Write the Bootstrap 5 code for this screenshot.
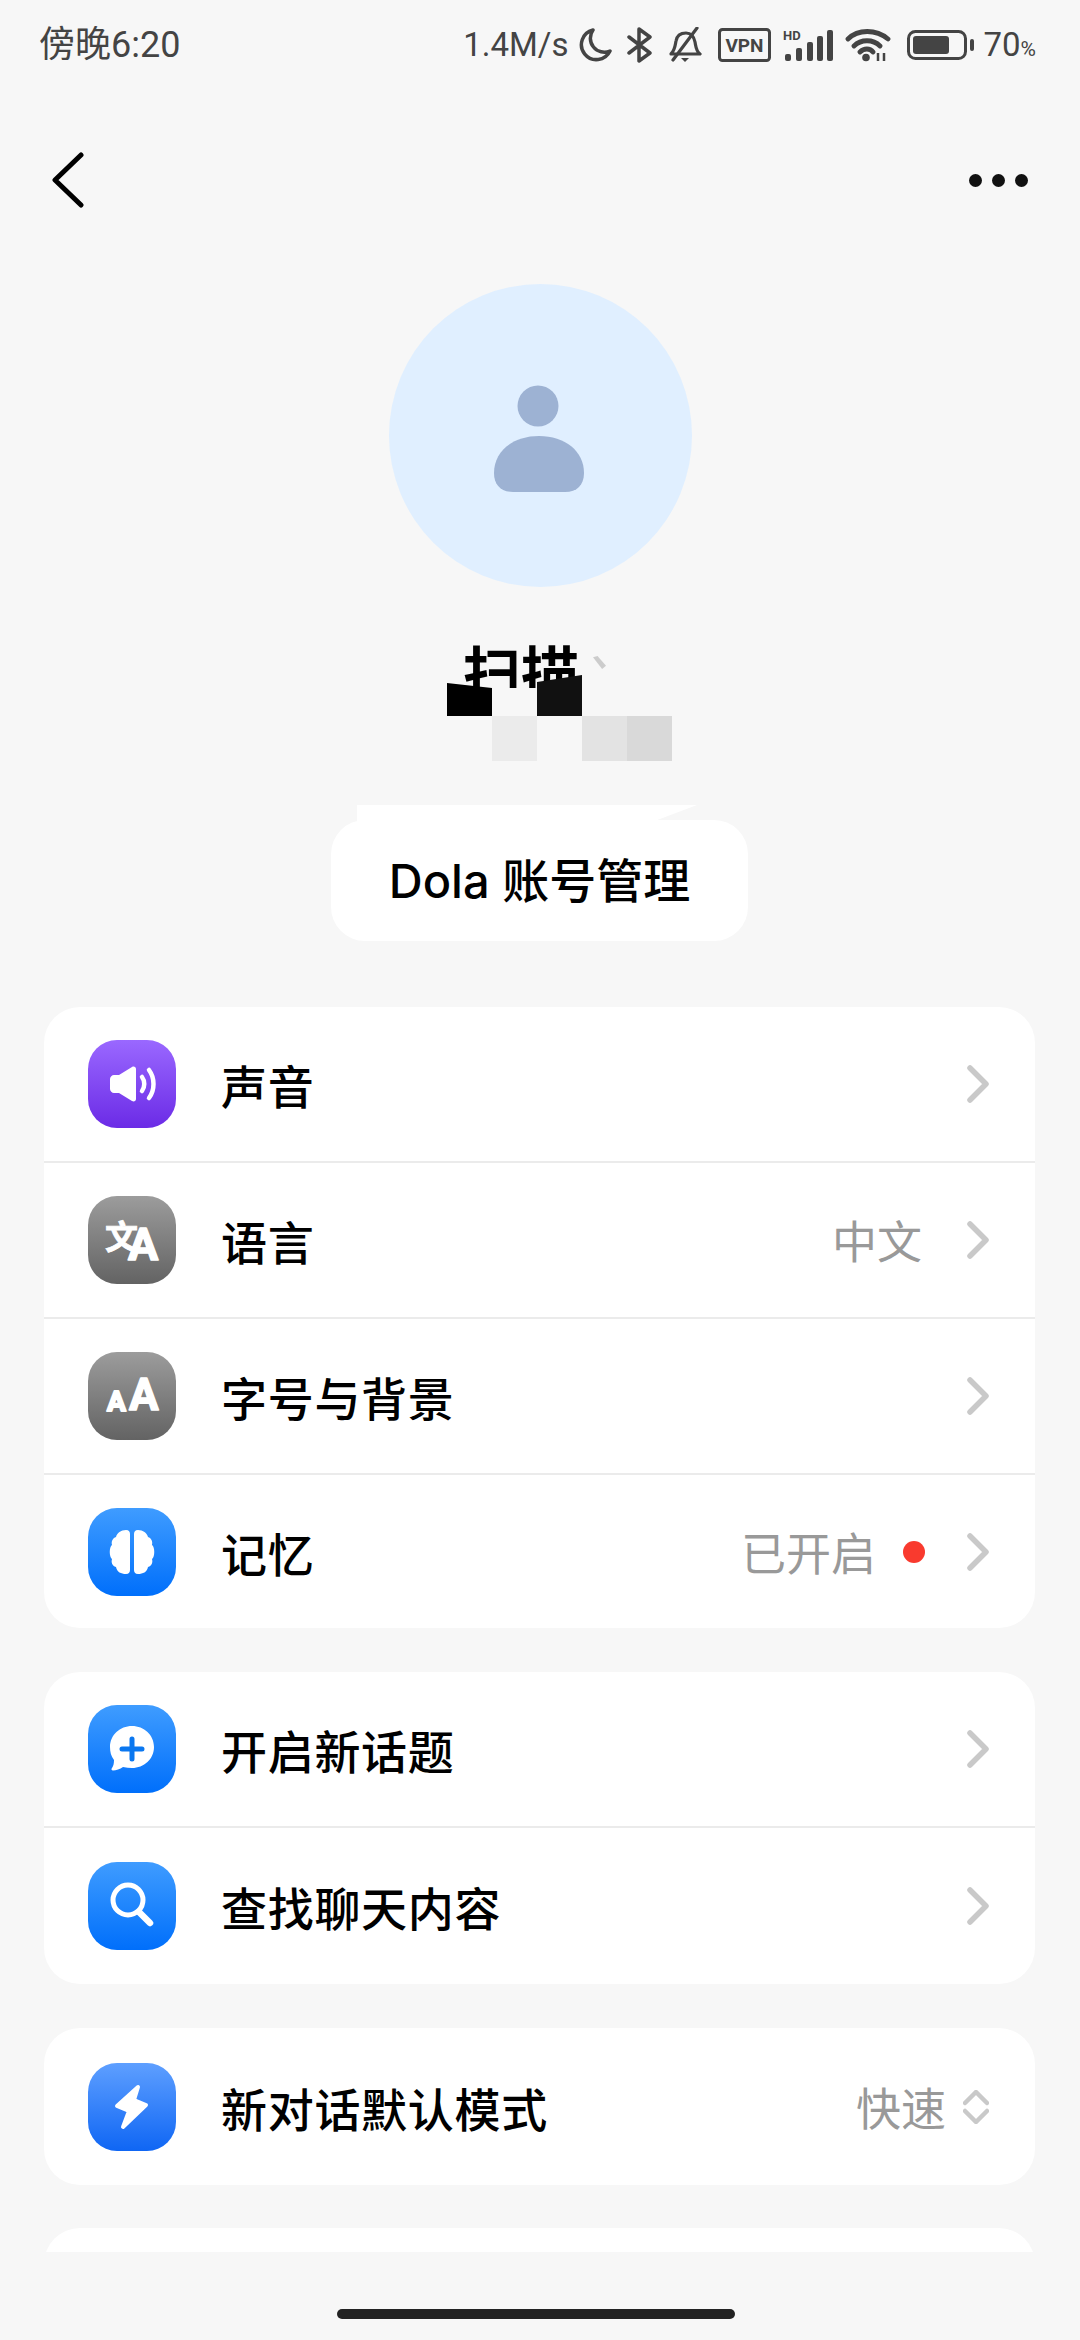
<!DOCTYPE html>
<html lang="zh-CN">
<head>
  <meta charset="UTF-8" />
  <title>Dola</title>
  <meta name="viewport" content="width=device-width, initial-scale=1" />
  <link href="https://cdn.jsdelivr.net/npm/bootstrap@5.3.0/dist/css/bootstrap.min.css" rel="stylesheet" />
  <style>
    html, body {
      width: 1080px;
      height: 2340px;
      overflow: hidden;
    }
    body {
      background-color: #f7f7f7;
      color: #000;
      font-family: "Noto Sans CJK SC", "Noto Sans", sans-serif;
    }
    .status-row {
      height: 90px;
      padding: 0 44px 0 39px;
      color: #444;
      font-family: Roboto, "Noto Sans CJK SC", sans-serif;
      font-size: 33px;
    }
    .status-time { font-size: 36px; }
    .status-pct small { font-size: 21px; }
    .status-icons svg { display: block; }
    .top-row {
      height: 120px;
      margin-top: 30px;
      padding: 0 52px;
    }
    .more-dots { gap: 10px; }
    .more-dots i {
      display: block;
      width: 13px;
      height: 13px;
      border-radius: 50%;
      background: #111;
    }
    .avatar-disc {
      width: 303px;
      height: 303px;
      margin-top: 44px;
      border-radius: 50%;
      background: #e0efff;
    }
    .avatar-figure { margin-top: 6px; margin-right: 2px; }
    .name-area {
      position: relative;
      height: 218px;
    }
    .name-text {
      position: absolute;
      left: 463px;
      top: 48px;
      font-size: 58px;
      line-height: 70px;
      font-weight: 700;
      white-space: nowrap;
    }
    .mos {
      position: absolute;
      height: 45px;
      width: 45px;
    }
    .mos-mask { left: 440px; top: 101px; width: 150px; height: 30px; background: #f7f7f7; }
    .mos-a { left: 447px; top: 96px; height: 33px; background: #000; clip-path: polygon(0 0, 100% 15%, 100% 100%, 0 100%); }
    .mos-b { left: 537px; top: 88px; height: 41px; background: #111; clip-path: polygon(0 17%, 100% 0, 100% 100%, 0 100%); }
    .mos-c { left: 492px; top: 129px; background: #ebebeb; }
    .mos-d { left: 582px; top: 129px; background: #e3e3e3; }
    .mos-e { left: 627px; top: 129px; background: #d9d9d9; }
    .mos-tick { left: 593px; top: 69px; width: 13px; height: 13px; background: #ccc; clip-path: polygon(0 10%, 35% 0, 100% 75%, 70% 100%); }
    .account-wrap {
      position: relative;
      height: 136px;
    }
    .account-tail {
      position: absolute;
      left: 357px;
      top: 0;
      width: 340px;
      height: 20px;
      background: #fff;
      clip-path: polygon(0 0, 100% 0, 86% 90%, 0 100%);
    }
    .account-btn {
      position: absolute;
      left: 331px;
      top: 15px;
      width: 417px;
      height: 121px;
      border: 0;
      border-radius: 34px;
      background: #fff;
      color: #000;
      font-family: Inter, "Noto Sans CJK SC", sans-serif;
      font-size: 47px;
      font-weight: 500;
      padding: 2px 0 0;
    }
    .account-btn:hover { background: #fff; color: #000; }
    .scroll-area {
      height: 1245px;
      margin-top: 66px;
      padding: 0 45px 0 44px;
      overflow: hidden;
    }
    .set-card {
      --bs-list-group-border-radius: 36px;
      --bs-list-group-border-width: 0;
      margin-bottom: 44px;
    }
    .set-row {
      height: 156px;
      padding: 0 46px 0 44px;
      border: 0;
      border-bottom: 2px solid #ebebeb;
      color: #000;
    }
    .set-row:last-child { border-bottom: 0; height: 153px; }
    .set-card-b .set-row:last-child { height: 156px; }
    .set-card-c { margin-bottom: 43px; }
    .set-card-c .set-row:last-child { height: 157px; }
    .set-card-d .set-row:last-child { height: 157px; }
    .tile {
      width: 88px;
      height: 88px;
      flex: none;
      border-radius: 29px;
      margin-right: 45px;
    }
    .tile svg { display: block; }
    .tile-purple { background: linear-gradient(#9a68ff, #6b2be6); }
    .tile-gray { background: linear-gradient(#9c9c9c, #636363); }
    .tile-blue { background: linear-gradient(#3f9cff, #006ffb); }
    .tile-bolt { background: linear-gradient(#5e9fff, #0f66f4); }
    .row-label {
      font-size: 46px;
      font-weight: 500;
      line-height: 60px;
      letter-spacing: 0.7px;
    }
    .row-value {
      color: #999;
      font-size: 45px;
      line-height: 60px;
      margin-right: 45px;
    }
    .row-value-tight { margin-right: 17px; }
    .row-value-dot { margin-right: 27px; }
    .red-dot {
      width: 22px;
      height: 22px;
      border-radius: 50%;
      background: #f93a2e;
      margin-right: 42px;
    }
    .home-bar {
      width: 398px;
      height: 10px;
      margin: 57px 0 0 337px;
      border-radius: 5px;
      background: #222;
    }
  </style>
</head>
<body>

  <!-- status bar -->
  <div class="status-row d-flex align-items-center justify-content-between">
    <div class="status-time">傍晚6:20</div>
    <div class="status-icons d-flex align-items-center">
      <span style="margin-right:9px">1.4M/s</span>
      <svg width="35" height="36" viewBox="0 0 35 36" style="margin-right:13px"><path d="M15 3A15 15 0 1 0 32 24A14 14 0 0 1 15 3Z" fill="none" stroke="#444" stroke-width="3.5" stroke-linejoin="round"/></svg>
      <svg width="28" height="36" viewBox="0 0 28 36" style="margin-right:14px"><path d="M3 10L24 26L13 34V2L24 10L3 26" fill="none" stroke="#444" stroke-width="3.5" stroke-linejoin="round" stroke-linecap="round"/></svg>
      <svg width="34" height="36" viewBox="0 0 34 36" style="margin-right:16px"><path d="M3 27C7 23 7 19 8 14C9 8 13 6 18 6C23 6 26 10 27 15C28 20 28 24 32 27H3Z" fill="none" stroke="#444" stroke-width="3.2" stroke-linejoin="round"/><path d="M29 1L5 33" stroke="#444" stroke-width="3.2" stroke-linecap="round"/><path d="M13 31H21L17 35Z" fill="#444"/></svg>
      <svg width="53" height="34" viewBox="0 0 53 34" style="margin-right:12px"><rect x="1.5" y="1.5" width="50" height="31" rx="3" fill="none" stroke="#444" stroke-width="3"/><text x="26.5" y="24" text-anchor="middle" font-family="Roboto, sans-serif" font-weight="700" font-size="19" fill="#444">VPN</text></svg>
      <svg width="50" height="32" viewBox="0 0 50 32" style="margin-right:12px"><text x="0" y="11" font-family="Roboto, sans-serif" font-weight="700" font-size="13" fill="#444">HD</text><rect x="2" y="25" width="6" height="7" rx="2" fill="#444"/><rect x="13" y="19" width="6" height="13" rx="2" fill="#444"/><rect x="24" y="13" width="6" height="19" rx="2" fill="#444"/><rect x="34" y="7" width="6" height="25" rx="2" fill="#444"/><rect x="44" y="1" width="6" height="31" rx="2" fill="#444"/></svg>
      <svg width="46" height="34" viewBox="0 0 46 34" style="margin-right:16px"><path d="M3 11C13 1 31 1 43 11M9 18C16 11 28 11 35 18M15 24C19 20 25 20 28 24" fill="none" stroke="#444" stroke-width="4.800" stroke-linecap="round"/><circle cx="21" cy="29.500" r="3.800" fill="#444"/><path d="M33 25V33M39 25V33" stroke="#444" stroke-width="2.5"/></svg>
      <svg width="67" height="30" viewBox="0 0 67 30" style="margin-right:10px"><rect x="1.5" y="1.5" width="57" height="27" rx="7" fill="none" stroke="#444" stroke-width="3"/><rect x="6" y="6" width="36" height="18" rx="3" fill="#444"/><rect x="63" y="9" width="4" height="12" rx="2" fill="#444"/></svg>
      <span class="status-pct">70<small>%</small></span>
    </div>
  </div>

  <!-- back and more -->
  <div class="top-row d-flex align-items-center justify-content-between">
    <svg width="32" height="56" viewBox="0 0 32 56"><path d="M29 3L3 28L29 53" fill="none" stroke="#000" stroke-width="5" stroke-linecap="round" stroke-linejoin="round"/></svg>
    <div class="more-dots d-flex"><i></i><i></i><i></i></div>
  </div>

  <!-- profile -->
  <div class="avatar-disc mx-auto d-flex align-items-center justify-content-center">
    <svg class="avatar-figure" width="92" height="107" viewBox="0 0 92 107"><circle cx="45" cy="21" r="20.500" fill="#9db2d3"/><path d="M1 88C1 66 20 51 46 51C72 51 91 66 91 88C91 100 84 107 72 107H20C8 107 1 100 1 88Z" fill="#9db2d3"/></svg>
  </div>

  <div class="name-area">
    <div class="name-text">扫描</div>
    <div class="mos mos-mask"></div>
    <div class="mos mos-a"></div>
    <div class="mos mos-b"></div>
    <div class="mos mos-c"></div>
    <div class="mos mos-d"></div>
    <div class="mos mos-e"></div>
    <div class="mos mos-tick"></div>
  </div>

  <div class="account-wrap">
    <div class="account-tail"></div>
    <button type="button" class="btn account-btn">Dola 账号管理</button>
  </div>

  <!-- settings -->
  <div class="scroll-area">

    <div class="list-group set-card">
      <div class="list-group-item set-row d-flex align-items-center">
        <div class="tile tile-purple">
          <svg width="88" height="88" viewBox="0 0 88 88"><path d="M26 35H31L44 27C46 26 48 27 48 29V59C48 61 46 62 44 61L31 53H26C24 53 22 51 22 49V39C22 37 24 35 26 35Z" fill="#fff"/><path d="M54 37C57 41 57 47 54 51" fill="none" stroke="#fff" stroke-width="4.5" stroke-linecap="round"/><path d="M61 30C67 38 67 50 61 58" fill="none" stroke="#fff" stroke-width="4.5" stroke-linecap="round"/></svg>
        </div>
        <div class="row-label me-auto">声音</div>
        <svg width="22" height="38" viewBox="0 0 22 38"><path d="M3 3L19 19L3 35" fill="none" stroke="#c9c9c9" stroke-width="5.5" stroke-linecap="round" stroke-linejoin="round"/></svg>
      </div>
      <div class="list-group-item set-row d-flex align-items-center">
        <div class="tile tile-gray">
          <svg width="88" height="88" viewBox="0 0 88 88"><text x="17" y="53" font-family="'Noto Sans CJK SC', sans-serif" font-weight="700" font-size="33" fill="#fff" stroke="#fff" stroke-width="0.8">文</text><text x="40" y="64" font-family="Roboto, sans-serif" font-weight="700" font-size="45" fill="#fff" stroke="#fff" stroke-width="1.500" stroke-linejoin="round">A</text></svg>
        </div>
        <div class="row-label me-auto">语言</div>
        <div class="row-value">中文</div>
        <svg width="22" height="38" viewBox="0 0 22 38"><path d="M3 3L19 19L3 35" fill="none" stroke="#c9c9c9" stroke-width="5.5" stroke-linecap="round" stroke-linejoin="round"/></svg>
      </div>
      <div class="list-group-item set-row d-flex align-items-center">
        <div class="tile tile-gray">
          <svg width="88" height="88" viewBox="0 0 88 88"><text x="19" y="59" font-family="Roboto, sans-serif" font-weight="700" font-size="28" fill="#fff" stroke="#fff" stroke-width="2" stroke-linejoin="round">A</text><text x="41" y="58" font-family="Roboto, sans-serif" font-weight="700" font-size="44" fill="#fff" stroke="#fff" stroke-width="1.500" stroke-linejoin="round">A</text></svg>
        </div>
        <div class="row-label me-auto">字号与背景</div>
        <svg width="22" height="38" viewBox="0 0 22 38"><path d="M3 3L19 19L3 35" fill="none" stroke="#c9c9c9" stroke-width="5.5" stroke-linecap="round" stroke-linejoin="round"/></svg>
      </div>
      <div class="list-group-item set-row d-flex align-items-center">
        <div class="tile tile-blue">
          <svg width="88" height="88" viewBox="0 0 88 88"><path d="M38 22C41 22 42 24 42 26V62C42 64 41 66 38 66C33 66 29 64 28 59C24 58 23 54 24 51C21 49 21 39 24 37C23 33 25 30 28 29C29 25 33 22 38 22Z" fill="#fff"/><path d="M50 22C47 22 46 24 46 26V62C46 64 47 66 50 66C55 66 59 64 60 59C64 58 65 54 64 51C67 49 67 39 64 37C65 33 63 30 60 29C59 25 55 22 50 22Z" fill="#fff"/></svg>
        </div>
        <div class="row-label me-auto">记忆</div>
        <div class="row-value row-value-dot">已开启</div>
        <div class="red-dot"></div>
        <svg width="22" height="38" viewBox="0 0 22 38"><path d="M3 3L19 19L3 35" fill="none" stroke="#c9c9c9" stroke-width="5.5" stroke-linecap="round" stroke-linejoin="round"/></svg>
      </div>
    </div>

    <div class="list-group set-card set-card-b">
      <div class="list-group-item set-row d-flex align-items-center">
        <div class="tile tile-blue">
          <svg width="88" height="88" viewBox="0 0 88 88"><path d="M44 21C56 21 66 30 66 42C66 54 56 63 44 63C41 63 38 62.500 35 62C32 64 28 65.500 25 65.500C23.500 65.500 23 64 24 63C25.500 61 26 58 26 55C23 51 22 47 22 42C22 30 32 21 44 21Z" fill="#fff"/><path d="M44 34V54M34 44H54" stroke="#0a77f0" stroke-width="5" stroke-linecap="round"/></svg>
        </div>
        <div class="row-label me-auto">开启新话题</div>
        <svg width="22" height="38" viewBox="0 0 22 38"><path d="M3 3L19 19L3 35" fill="none" stroke="#c9c9c9" stroke-width="5.5" stroke-linecap="round" stroke-linejoin="round"/></svg>
      </div>
      <div class="list-group-item set-row d-flex align-items-center">
        <div class="tile tile-blue">
          <svg width="88" height="88" viewBox="0 0 88 88"><circle cx="40" cy="38" r="15" fill="none" stroke="#fff" stroke-width="5"/><path d="M51 50L62 61" stroke="#fff" stroke-width="6.500" stroke-linecap="round"/></svg>
        </div>
        <div class="row-label me-auto">查找聊天内容</div>
        <svg width="22" height="38" viewBox="0 0 22 38"><path d="M3 3L19 19L3 35" fill="none" stroke="#c9c9c9" stroke-width="5.5" stroke-linecap="round" stroke-linejoin="round"/></svg>
      </div>
    </div>

    <div class="list-group set-card set-card-c">
      <div class="list-group-item set-row d-flex align-items-center">
        <div class="tile tile-bolt">
          <svg width="88" height="88" viewBox="0 0 88 88"><path d="M50 24L29 43L41 48L35 64L58 42L46 37Z" fill="#fff" stroke="#fff" stroke-width="4" stroke-linejoin="round"/></svg>
        </div>
        <div class="row-label me-auto">新对话默认模式</div>
        <div class="row-value row-value-tight">快速</div>
        <svg width="26" height="34" viewBox="0 0 26 34"><path d="M2 13L13 2L24 13M2 21L13 32L24 21" fill="none" stroke="#c9c9c9" stroke-width="4.500" stroke-linecap="round" stroke-linejoin="round"/></svg>
      </div>
    </div>

    <div class="list-group set-card set-card-d">
      <div class="list-group-item set-row"></div>
    </div>

  </div>

  <div class="home-bar"></div>

  <script src="https://cdn.jsdelivr.net/npm/bootstrap@5.3.0/dist/js/bootstrap.bundle.min.js"></script>
</body>
</html>
